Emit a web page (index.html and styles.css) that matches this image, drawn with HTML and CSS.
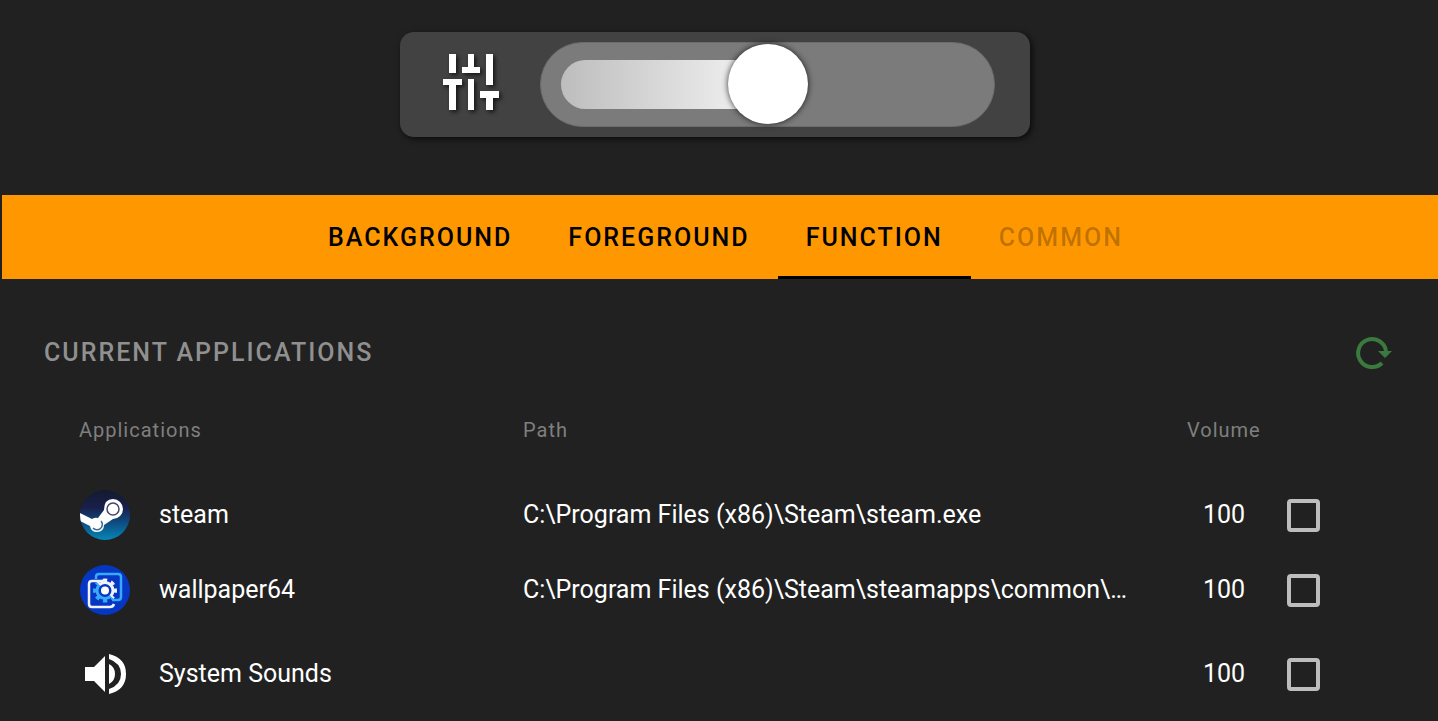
FILE: index.html
```html
<!DOCTYPE html>
<html lang="en">
<head>
<meta charset="utf-8">
<title>Volume Mixer</title>
<link rel="stylesheet" href="styles.css">
</head>
<body>
<header class="preview">
  <div class="mixer">
    <svg class="mixer-icon" viewBox="0 3 58 58" aria-hidden="true">
      <path d="M6 1h7v19H6zM0 26h19v6h-6v25H6V32H0zM25 1h6v13h6v6H19v-6h6zM25 26h6v31h-6zM43 1h7v31h-7zM37 38h19v7h-6v12h-7V45h-6z" fill="#fff"/>
    </svg>
    <input class="slider" type="range" min="0" max="100" value="50" aria-label="Volume">
  </div>
</header>
<nav class="tabs" role="tablist">
  <button class="tab" role="tab">BACKGROUND</button>
  <button class="tab" role="tab">FOREGROUND</button>
  <button class="tab tab-active" role="tab" aria-selected="true">FUNCTION</button>
  <button class="tab" role="tab" disabled>COMMON</button>
</nav>
<main class="content">
  <div class="section-head">
    <h2 class="section-title">CURRENT APPLICATIONS</h2>
    <button class="refresh" aria-label="Refresh">
      <svg class="refresh-icon" viewBox="0 0 42 42" aria-hidden="true">
        <path d="M28 31A14 14 0 1 1 32 19" fill="none" stroke="#3b7a3e" stroke-width="4"/>
        <path d="M24 19h14l-7 7z" fill="#3b7a3e"/>
      </svg>
    </button>
  </div>
  <table class="apps">
    <colgroup><col class="col-name"><col class="col-path"><col class="col-volume"><col class="col-check"></colgroup>
    <thead>
      <tr><th scope="col">Applications</th><th scope="col">Path</th><th scope="col">Volume</th><th></th></tr>
    </thead>
    <tbody>
      <tr>
        <td>
          <div class="app">
            <svg class="app-icon" viewBox="0 0 50 50" aria-hidden="true">
              <defs>
                <linearGradient id="steam-bg" x1="0" y1="0" x2="0" y2="1"><stop offset="0" stop-color="#131a30"/><stop offset=".35" stop-color="#191f4a"/><stop offset=".65" stop-color="#0e4b80"/><stop offset="1" stop-color="#0688b8"/></linearGradient>
                <clipPath id="round"><circle cx="25" cy="25" r="25"/></clipPath>
              </defs>
              <g clip-path="url(#round)">
                <path d="M0 0h50v50H0z" fill="url(#steam-bg)"/>
                <path d="M0 23l12 6q3-2 6-1l6-8q0-11 9-11a10 10 0 0 1 0 20l-9 6q0 7-7 7-6 0-7-6L0 31z" fill="#fff"/>
                <circle cx="33" cy="19" r="6" fill="#fff" stroke="#45456c" stroke-width="1.500"/>
                <path d="M13 38a5 5 0 0 0 8-7" fill="none" stroke="#3a6c94" stroke-width="1.500"/>
              </g>
            </svg>
            <span>steam</span>
          </div>
        </td>
        <td class="path">C:\Program Files (x86)\Steam\steam.exe</td>
        <td class="volume">100</td>
        <td><input class="check" type="checkbox" aria-label="Select steam"></td>
      </tr>
      <tr>
        <td>
          <div class="app">
            <svg class="app-icon" viewBox="0 0 50 50" aria-hidden="true">
              <circle cx="25" cy="25" r="25" fill="#0537c3"/>
              <path d="M16 14v-2q0-3 3-3h19q3 0 3 3v20q0 3-3 3h-6" fill="none" stroke="#38a9fb" stroke-width="2.500"/>
              <path d="M23 16H12q-3 0-3 3v20q0 3 3 3h18q3 0 4-3" fill="none" stroke="#f0f2ff" stroke-width="2.500"/>
              <g fill="none" transform="rotate(45 25 25.500)">
                <path d="M15 25.500a10 10 0 0 0 20 0" stroke="#38a9fb" stroke-width="4" stroke-dasharray="4 3.850" stroke-dashoffset="2"/>
                <path d="M17 25.500a8 8 0 0 0 16 0" stroke="#38a9fb" stroke-width="3"/>
                <path d="M15 25.500a10 10 0 0 1 20 0" stroke="#f0f2ff" stroke-width="4" stroke-dasharray="4 3.850" stroke-dashoffset="2"/>
                <path d="M17 25.500a8 8 0 0 1 16 0" stroke="#f0f2ff" stroke-width="3"/>
              </g>
              <circle cx="25" cy="25.500" r="4" fill="#fff"/>
            </svg>
            <span>wallpaper64</span>
          </div>
        </td>
        <td class="path">C:\Program Files (x86)\Steam\steamapps\common\…</td>
        <td class="volume">100</td>
        <td><input class="check" type="checkbox" aria-label="Select wallpaper64"></td>
      </tr>
      <tr class="last">
        <td>
          <div class="app">
            <svg class="app-icon" viewBox="0 0 50 50" aria-hidden="true">
              <path d="M5 18h9L25 7v36L14 32H5zM29 15q6 3 6 10t-6 10zM29 5q17 4 17 20T29 45v-5q12-4 12-15T29 10z" fill="#fff"/>
            </svg>
            <span>System Sounds</span>
          </div>
        </td>
        <td class="path"></td>
        <td class="volume">100</td>
        <td><input class="check" type="checkbox" aria-label="Select System Sounds"></td>
      </tr>
    </tbody>
  </table>
</main>
</body>
</html>
```
FILE: styles.css
```css
* { box-sizing: border-box; }
body {
  margin: 0;
  padding-left: 2px;
  background: #212121;
  color: #fff;
  font: 25px/32px Roboto, sans-serif;
}
button { border: 0; background: none; font: inherit; }

.preview {
  display: flex;
  justify-content: center;
  padding: 32px 10px 58px 0;
}
.mixer {
  display: flex;
  align-items: center;
  gap: 39px;
  padding: 10px 35px 10px 43px;
  border-radius: 14px;
  background: #424242;
  box-shadow: 2px 2px 6px rgba(0, 0, 0, .7);
}
.mixer-icon {
  width: 58px;
  height: 58px;
  overflow: visible;
  filter: drop-shadow(2px 2px 2px rgba(0, 0, 0, .7));
}
.slider {
  appearance: none;
  width: 455px;
  height: 85px;
  margin: 0;
  padding: 0 20px;
  border: 1px solid #6c6c6c;
  border-radius: 43px;
  background: #7b7b7b;
}
.slider::-webkit-slider-runnable-track {
  height: 49px;
  border-radius: 25px;
  background: linear-gradient(90deg, #bdbdbd, #f0f0f0 45%, transparent 45%);
}
.slider::-webkit-slider-thumb {
  appearance: none;
  width: 80px;
  height: 80px;
  margin-top: -16px;
  border-radius: 50%;
  background: #fff;
  box-shadow: 0 0 6px rgba(0, 0, 0, .8);
}

.tabs {
  display: flex;
  justify-content: center;
  height: 84px;
  padding-left: 11px;
  background: #ff9800;
}
.tab {
  padding: 2px 28px 0;
  border-top: 3px solid transparent;
  border-bottom: 3px solid transparent;
  color: #000;
  font-weight: 500;
  letter-spacing: 2px;
}
.tab-active { border-bottom-color: #000; }
.tab:disabled { color: rgba(0, 0, 0, .26); }

.content { padding: 49px 42px 0; }
.section-head {
  display: flex;
  justify-content: space-between;
  align-items: center;
  height: 50px;
}
.section-title {
  margin: 0;
  color: #909090;
  font-size: 25px;
  font-weight: 500;
  letter-spacing: 2px;
}
.refresh { padding: 0; }
.refresh-icon { display: block; width: 42px; height: 42px; }

.apps {
  width: 100%;
  padding: 0 33px 0 34px;
  border-collapse: separate;
  border-spacing: 0;
  table-layout: fixed;
}
.apps th {
  height: 99px;
  padding: 4px 1px 0;
  color: #7f7f7f;
  font-size: 20px;
  font-weight: 400;
  letter-spacing: 1px;
  text-align: left;
}
.apps td { height: 75px; padding: 0 1px; }
.apps .last td { height: 93px; }
.apps td:first-child { padding-left: 2px; }
.col-name { width: 444px; }
.col-volume { width: 100px; }
.col-check { width: 77px; }
.app { display: flex; align-items: center; gap: 29px; }
.app-icon { flex: none; width: 50px; height: 50px; }
.apps .path {
  overflow: hidden;
  text-overflow: ellipsis;
  white-space: nowrap;
}
.apps .volume { padding-left: 17px; }
.check {
  appearance: none;
  display: block;
  width: 33px;
  height: 33px;
  margin: 1px 0 0;
  border: 4px solid #bdbdbd;
  border-radius: 4px;
}
```
